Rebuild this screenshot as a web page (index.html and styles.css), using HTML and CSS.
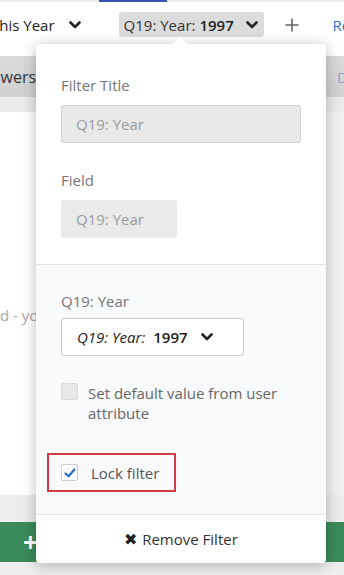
FILE: index.html
```html
<!DOCTYPE html>
<html lang="en">
<head>
    <meta charset="UTF-8">
    <meta name="viewport" content="width=device-width, initial-scale=1.0">
    <title>Dashboard Filter</title>
    <link rel="stylesheet" href="styles.css">
</head>
<body>
    <div class="page">
        <!-- Tab indicator line -->
        <div class="tabline">
            <span class="tab-gap"></span>
            <span class="tab-active"></span>
            <span class="tab-rest"></span>
        </div>

        <!-- Filter bar -->
        <div class="filters">
            <div class="filter-plain">This Year
                <svg class="chev" width="12" height="8" viewBox="0 0 12 8"><polyline points="1.5,1.5 6,6 10.5,1.5" /></svg>
            </div>
            <div class="filter-chip">Q19: Year: <b>1997</b>
                <svg class="chev" width="12" height="8" viewBox="0 0 12 8"><polyline points="1.5,1.5 6,6 10.5,1.5" /></svg>
            </div>
            <svg class="plus" width="14" height="14" viewBox="0 0 14 14"><path d="M7 0.5v13M0.5 7h13" /></svg>
            <div class="filter-link">Reset</div>
        </div>

        <div class="spacer"></div>
        <div class="toolbar">
            <span class="toolbar-left">Answers</span>
            <span class="toolbar-right">D</span>
        </div>
        <div class="band"></div>
        <div class="card">
            <div class="card-text">d - you</div>
        </div>
        <div class="band band-bottom"></div>
        <div class="green-bar"><span class="green-plus">+</span></div>
    </div>

    <!-- Filter popover -->
    <div class="popover">
        <div class="popover-arrow"></div>

        <div class="pop-section">
            <div class="pop-label">Filter Title</div>
            <div class="pop-input">Q19: Year</div>
            <div class="pop-label field-label">Field</div>
            <div class="pop-field">Q19: Year</div>
        </div>

        <div class="pop-section pop-options">
            <div class="pop-label">Q19: Year</div>
            <div class="pop-select">
                <i>Q19: Year:</i> <b>1997</b>
                <svg class="chev" width="12" height="8" viewBox="0 0 12 8"><polyline points="1.5,1.5 6,6 10.5,1.5" /></svg>
            </div>

            <div class="check-row">
                <span class="checkbox"></span>
                <span class="check-text">Set default value from user attribute</span>
            </div>

            <div class="lock-box">
                <span class="checkbox checked">
                    <svg width="12" height="10" viewBox="0 0 12 10"><polyline points="1.5,5.5 4.5,8.2 10.5,1.5" /></svg>
                </span>
                <span class="lock-text">Lock filter</span>
            </div>
        </div>

        <div class="pop-footer">
            <span class="remove-icon">&#10006;</span> Remove Filter
        </div>
    </div>
</body>
</html>
```

FILE: styles.css
```css
/* Base */
body {
    margin: 0;
    width: 344px;
    height: 575px;
    overflow: hidden;
    font-family: "Open Sans", Arial, sans-serif;
    color: #333;
    background: #eeeeee;
    position: relative;
}

.page {
    display: flex;
    flex-direction: column;
}

/* Tab underline */
.tabline {
    display: flex;
    height: 2px;
}

.tab-gap {
    width: 99px;
    background: #ececec;
}

.tab-active {
    width: 68px;
    background: #3a55b4;
}

.tab-rest {
    flex: 1;
    background: #ececec;
}

/* Filter bar */
.filters {
    height: 39px;
    padding-top: 3px;
    background: #ffffff;
    display: flex;
    align-items: center;
    white-space: nowrap;
    font-size: 15px;
    overflow: hidden;
}

.filter-plain {
    margin-left: -9px;
    display: flex;
    align-items: center;
    gap: 14px;
    color: #222;
}

.filter-chip {
    flex: none;
    margin-left: 38px;
    box-sizing: border-box;
    width: 145px;
    height: 25px;
    padding: 0 6px 0 5px;
    background: #dcdcdc;
    border-radius: 3px;
    display: flex;
    align-items: center;
    color: #333;
}

.filter-chip b {
    margin-left: 4px;
    font-weight: 600;
    color: #222;
}

.filter-chip .chev {
    margin-left: auto;
}

.chev polyline {
    fill: none;
    stroke: #222;
    stroke-width: 2.6;
    stroke-linecap: round;
    stroke-linejoin: round;
}

.plus {
    flex: none;
    margin-left: 21px;
}

.plus path {
    stroke: #666;
    stroke-width: 1.6;
}

.filter-link {
    margin-left: 34px;
    color: #2f73c9;
}

/* Background page pieces */
.spacer {
    height: 12px;
    background: #ffffff;
}

.toolbar {
    height: 41px;
    background: linear-gradient(#dadada, #d0d0d0);
    display: flex;
    align-items: center;
    justify-content: space-between;
    font-size: 16px;
    white-space: nowrap;
    overflow: hidden;
}

.toolbar-left {
    margin-left: -27px;
    color: #333;
}

.toolbar-right {
    margin-right: -4px;
    color: #8aa4c8;
    font-size: 15px;
}

.band {
    height: 15px;
    background: #ebebeb;
}

.card {
    height: 383px;
    background: linear-gradient(90deg, #ffffff 60%, #f1f1f1);
}

.card-text {
    margin-top: 193px;
    font-size: 15px;
    color: #a9a9a9;
    white-space: nowrap;
}

.band-bottom {
    height: 27px;
    background: #ececec;
}

.green-bar {
    height: 40px;
    background: #3b8a5b;
    display: flex;
    align-items: center;
}

.green-plus {
    margin-left: 23px;
    color: #ffffff;
    font-size: 26px;
    font-weight: bold;
    line-height: 1;
}

/* Popover */
.popover {
    position: absolute;
    left: 36px;
    top: 44px;
    width: 290px;
    height: 519px;
    background: #ffffff;
    border-radius: 4px;
    box-shadow: 0 2px 14px rgba(0, 0, 0, 0.28);
    display: flex;
    flex-direction: column;
    font-size: 15px;
}

.popover-arrow {
    position: absolute;
    left: 139px;
    top: -5px;
    width: 10px;
    height: 10px;
    background: #ffffff;
    transform: rotate(45deg);
}

.pop-section {
    padding: 31px 25px 26px;
    display: flex;
    flex-direction: column;
    align-items: flex-start;
    position: relative;
}

.pop-label {
    line-height: 20px;
    color: #767676;
}

.pop-input {
    margin-top: 10px;
    box-sizing: border-box;
    width: 240px;
    height: 38px;
    padding-left: 14px;
    line-height: 36px;
    background: #e9e9e9;
    border: 1px solid #cfcfcf;
    border-radius: 3px;
    color: #9b9b9b;
}

.field-label {
    margin-top: 27px;
}

.pop-field {
    margin-top: 10px;
    box-sizing: border-box;
    width: 116px;
    height: 38px;
    padding-left: 15px;
    line-height: 38px;
    background: #eaeaea;
    border-radius: 3px;
    color: #9b9b9b;
}

/* Options section */
.pop-options {
    flex: 1;
    padding-top: 26px;
    padding-bottom: 22px;
    background: #f9fafc;
    border-top: 1px solid #e4e4e4;
    border-bottom: 1px solid #e4e4e4;
}

.pop-select {
    margin-top: 7px;
    box-sizing: border-box;
    width: 183px;
    height: 38px;
    padding-left: 15px;
    background: #ffffff;
    border: 1px solid #c9c9c9;
    border-radius: 3px;
    display: flex;
    align-items: center;
    color: #222;
    white-space: pre;
}

.pop-select b {
    margin-left: 8px;
    font-weight: 600;
}

.pop-select .chev {
    margin-left: 13px;
}

.check-row {
    margin-top: 27px;
    display: flex;
    align-items: flex-start;
    gap: 10px;
}

.checkbox {
    flex: none;
    box-sizing: border-box;
    width: 17px;
    height: 17px;
    background: #e8e8e8;
    border: 1px solid #d8d8d8;
    border-radius: 2px;
    display: flex;
    align-items: center;
    justify-content: center;
}

.check-text {
    width: 190px;
    line-height: 20px;
    color: #666;
}

.lock-box {
    margin-top: 30px;
    margin-left: -14px;
    box-sizing: border-box;
    width: 129px;
    height: 39px;
    padding-left: 12px;
    border: 2px solid #d03a44;
    display: flex;
    align-items: center;
    gap: 13px;
}

.checkbox.checked {
    background: #ffffff;
    border-color: #cfcfcf;
}

.checkbox.checked polyline {
    fill: none;
    stroke: #1f6fc5;
    stroke-width: 2.2;
    stroke-linecap: round;
    stroke-linejoin: round;
}

.lock-text {
    color: #555;
}

/* Footer */
.pop-footer {
    height: 48px;
    display: flex;
    align-items: center;
    justify-content: center;
    gap: 5px;
    color: #333;
    font-size: 15px;
}

.remove-icon {
    font-size: 16px;
    color: #222;
}
```
